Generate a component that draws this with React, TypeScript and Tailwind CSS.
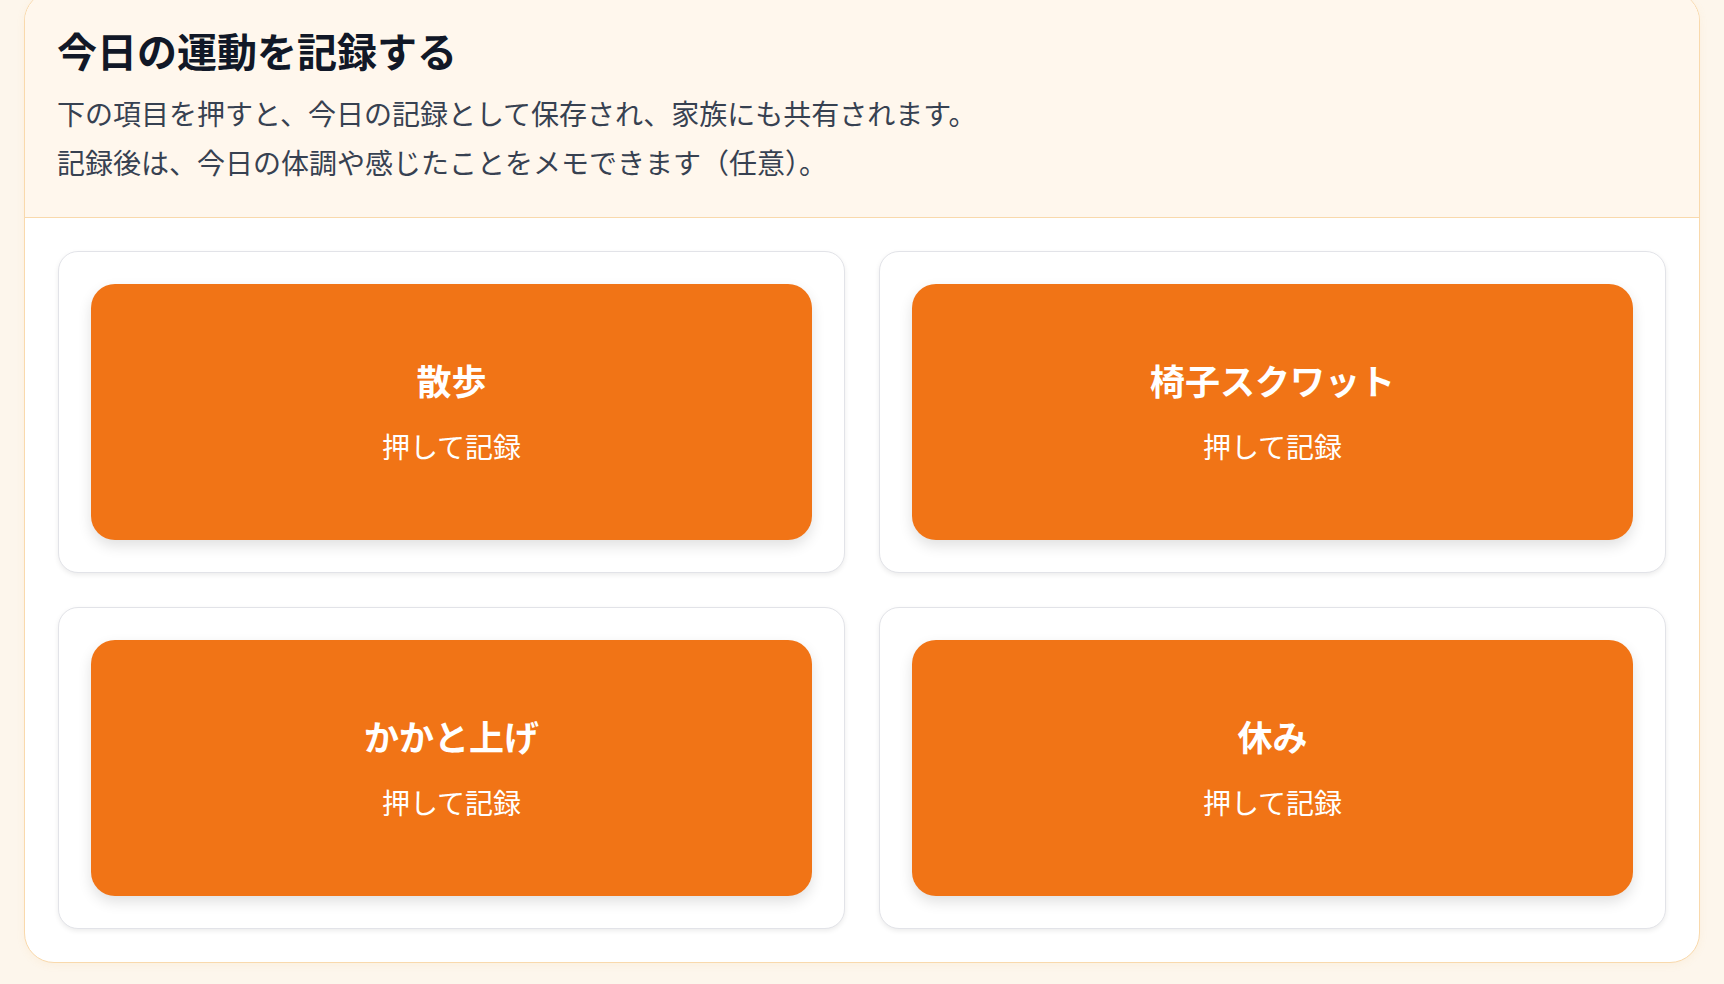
import React from 'react';

const exercises = [
  { id: 'walk', name: '散歩' },
  { id: 'squat', name: '椅子スクワット' },
  { id: 'heel', name: 'かかと上げ' },
  { id: 'rest', name: '休み' },
];

export default function App() {
  const record = (id: string) => {
    console.log('record', id);
  };

  return (
    <main
      className="min-h-screen bg-[#fdf6ec] px-6 pb-6 text-gray-900"
      style={{ fontFamily: '"Noto Sans CJK JP", "Noto Sans", sans-serif' }}
    >
      <section className="mt-[-9px] overflow-hidden rounded-[30px] border border-[#f9d9ac] bg-white shadow-[0_2px_8px_rgba(234,160,80,0.08)]">
        {/* header */}
        <div className="border-b border-[#f9d9ac] bg-[#fff7ed] px-8 pt-[33px] pb-[30px]">
          <h1 className="text-[40px] font-bold leading-[50px] text-[#111827]">今日の運動を記録する</h1>
          <div className="mt-[14px] text-[28px] leading-[49px] text-[#374151]">
            <p>下の項目を押すと、今日の記録として保存され、家族にも共有されます。</p>
            <p>記録後は、今日の体調や感じたことをメモできます（任意）。</p>
          </div>
        </div>

        {/* exercise buttons */}
        <div className="grid grid-cols-2 gap-[34px] p-[33px]">
          {exercises.map((ex) => (
            <div
              key={ex.id}
              className="rounded-[20px] border border-[#e2e3e8] bg-white p-8 shadow-[0_2px_5px_rgba(0,0,0,0.08)]"
            >
              <button
                type="button"
                onClick={() => record(ex.id)}
                className="flex h-[256px] w-full flex-col items-center justify-center rounded-[24px] bg-[#f17416] text-white shadow-[0_6px_14px_rgba(0,0,0,0.12)]"
              >
                <span className="text-[35px] font-bold leading-[46px]">{ex.name}</span>
                <span className="mt-[22px] text-[28px] leading-[42px]">押して記録</span>
              </button>
            </div>
          ))}
        </div>
      </section>
    </main>
  );
}
